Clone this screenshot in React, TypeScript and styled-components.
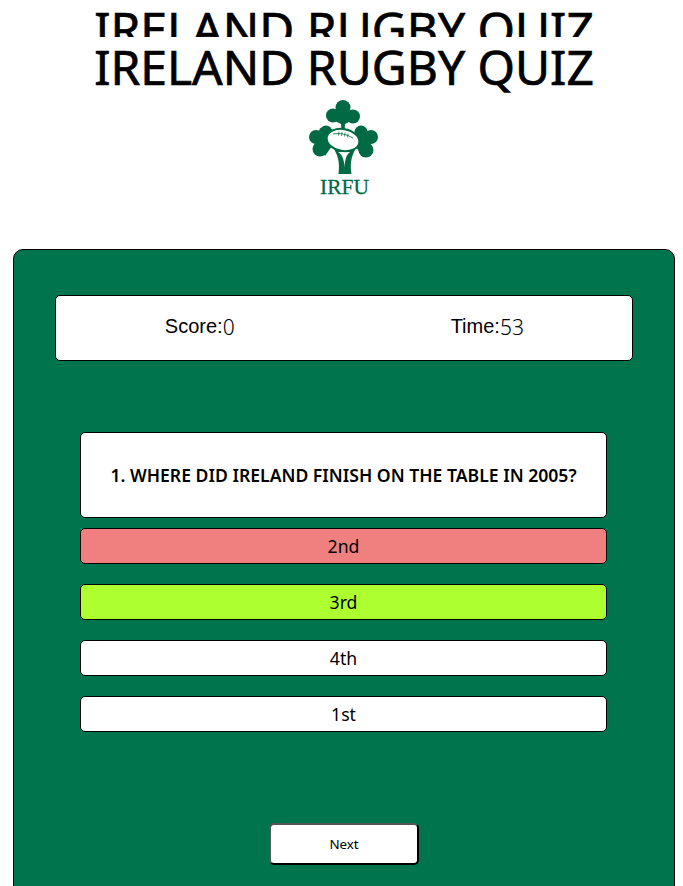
import React from "react";
import styled, { createGlobalStyle } from "styled-components";

const Global = createGlobalStyle`
  html, body { margin: 0; padding: 0; height: 886px; overflow: hidden; background: #fff; }
  body { font-family: "Noto Sans", sans-serif; color: #000; }
`;

const Page = styled.div`
  width: 683px;
  height: 886px;
  overflow: hidden;
`;

const Title = styled.h1<{ $height: number; $top?: number }>`
  box-sizing: border-box;
  margin: 0;
  padding-top: ${(p) => p.$top ?? 0}px;
  width: 688px;
  height: ${(p) => p.$height}px;
  overflow: hidden;
  text-align: center;
  font-family: "Noto Sans", sans-serif;
  font-size: 48px;
  font-weight: 400;
  line-height: 57px;
  -webkit-text-stroke: 0.7px #000;
  white-space: nowrap;
`;

const LogoWrap = styled.div`
  width: 688px;
  height: 155px;
  display: flex;
  justify-content: center;
  align-items: flex-start;
`;

const Panel = styled.main`
  box-sizing: border-box;
  margin-left: 13px;
  width: 662px;
  height: 700px;
  padding: 45px 41px 0;
  background: #00744c;
  border: 1px solid #000;
  border-radius: 10px;
  display: flex;
  flex-direction: column;
`;

const ScoreBar = styled.div`
  box-sizing: border-box;
  height: 66px;
  padding: 0 1px 6px 0;
  background: #fff;
  border: 1px solid #000;
  border-radius: 5px;
  display: grid;
  grid-template-columns: 1fr 1fr;
  align-items: center;
  justify-items: center;
`;

const Stat = styled.div`
  font-family: "Liberation Sans", Arial, sans-serif;
  font-size: 20px;
  line-height: 24px;
`;

const StatValue = styled.span`
  font-family: "Noto Sans", sans-serif;
  font-size: 21px;
  font-weight: 350;
  position: relative;
  top: 2px;
`;

const Quiz = styled.section`
  margin: 71px 26px 0 25px;
  display: flex;
  flex-direction: column;
`;

const Question = styled.h2`
  box-sizing: border-box;
  margin: 0 0 10px;
  height: 86px;
  background: #fff;
  border: 1px solid #000;
  border-radius: 5px;
  display: flex;
  align-items: center;
  justify-content: center;
  font-family: "Noto Sans", sans-serif;
  font-size: 17.6px;
  font-weight: 600;
  white-space: nowrap;
`;

const Option = styled.div<{ $bg?: string }>`
  box-sizing: border-box;
  height: 36px;
  margin-bottom: 20px;
  background: ${(p) => p.$bg ?? "#fff"};
  border: 1px solid #000;
  border-radius: 5px;
  display: flex;
  align-items: center;
  justify-content: center;
  font-size: 17.6px;
`;

const Next = styled.button`
  box-sizing: border-box;
  align-self: center;
  margin-top: 71px;
  width: 150px;
  height: 42px;
  background: #fff;
  border: 2px outset #000;
  border-color: #555 #000 #000 #555;
  border-radius: 5px;
  font-family: "Noto Sans", sans-serif;
  font-size: 13.33px;
  color: #000;
  padding: 0;
`;

const green = "#006a44";

function Logo() {
  return (
    <svg width="80" height="105" viewBox="304 94 80 105" fill={green} aria-label="IRFU">
      {/* top leaf */}
      <circle cx="343" cy="107.5" r="7.5" />
      <circle cx="333" cy="115.5" r="7" />
      <circle cx="353" cy="116.5" r="7" />
      <path d="M337 110 L349 110 L353 120 L345 124 L344.5 132 L341.5 132 L341 124 L333 120 Z" />
      {/* left leaf */}
      <circle cx="326" cy="132" r="6.5" />
      <circle cx="316" cy="137" r="7" />
      <circle cx="320" cy="149" r="7.5" />
      <path d="M320 128 L332 134 L332 146 L325 156 L316 142 Z" />
      {/* right leaf */}
      <circle cx="361" cy="132" r="6.5" />
      <circle cx="371" cy="137" r="7" />
      <circle cx="366" cy="150" r="7.5" />
      <path d="M366 128 L355 134 L356 147 L363 157 L372 142 Z" />
      {/* stem */}
      <path d="M334 149 C338 156 340 163 338.5 174 L351.5 174 C350 165 351 157 355 150 Z" />
      <path d="M338 152 C342 154 344.5 160 344.5 168 C345 160 346 155 350 152 Z" fill="#fff" />
      {/* ball */}
      <ellipse cx="343" cy="140" rx="17.5" ry="12" transform="rotate(10 343 140)" />
      <ellipse cx="343" cy="140" rx="15.5" ry="10" fill="#fff" transform="rotate(10 343 140)" />
      <path d="M333 134 Q343 132 353 138" fill="none" stroke={green} strokeWidth="0.8" />
      <path d="M339 131.5 l-0.5 4 M342 132 l-0.5 4 M345 132.5 l-0.5 4 M348 133.5 l-0.5 4" fill="none" stroke={green} strokeWidth="0.7" />
      <text
        x="344.5"
        y="193.5"
        textAnchor="middle"
        fontFamily="'Liberation Serif', serif"
        fontSize="21"
        textLength="49"
        lengthAdjust="spacingAndGlyphs"
        stroke={green}
        strokeWidth="0.3"
      >
        IRFU
      </text>
    </svg>
  );
}

export default function App() {
  return (
    <Page>
      <Global />
      <Title $height={37}>IRELAND RUGBY QUIZ</Title>
      <Title $height={57} $top={1}>IRELAND RUGBY QUIZ</Title>
      <LogoWrap>
        <Logo />
      </LogoWrap>
      <Panel>
        <ScoreBar>
          <Stat>
            Score:<StatValue>0</StatValue>
          </Stat>
          <Stat>
            Time:<StatValue>53</StatValue>
          </Stat>
        </ScoreBar>
        <Quiz>
          <Question>1. WHERE DID IRELAND FINISH ON THE TABLE IN 2005?</Question>
          <Option $bg="#f08080">2nd</Option>
          <Option $bg="#adff2f">3rd</Option>
          <Option>4th</Option>
          <Option>1st</Option>
        </Quiz>
        <Next>Next</Next>
      </Panel>
    </Page>
  );
}
